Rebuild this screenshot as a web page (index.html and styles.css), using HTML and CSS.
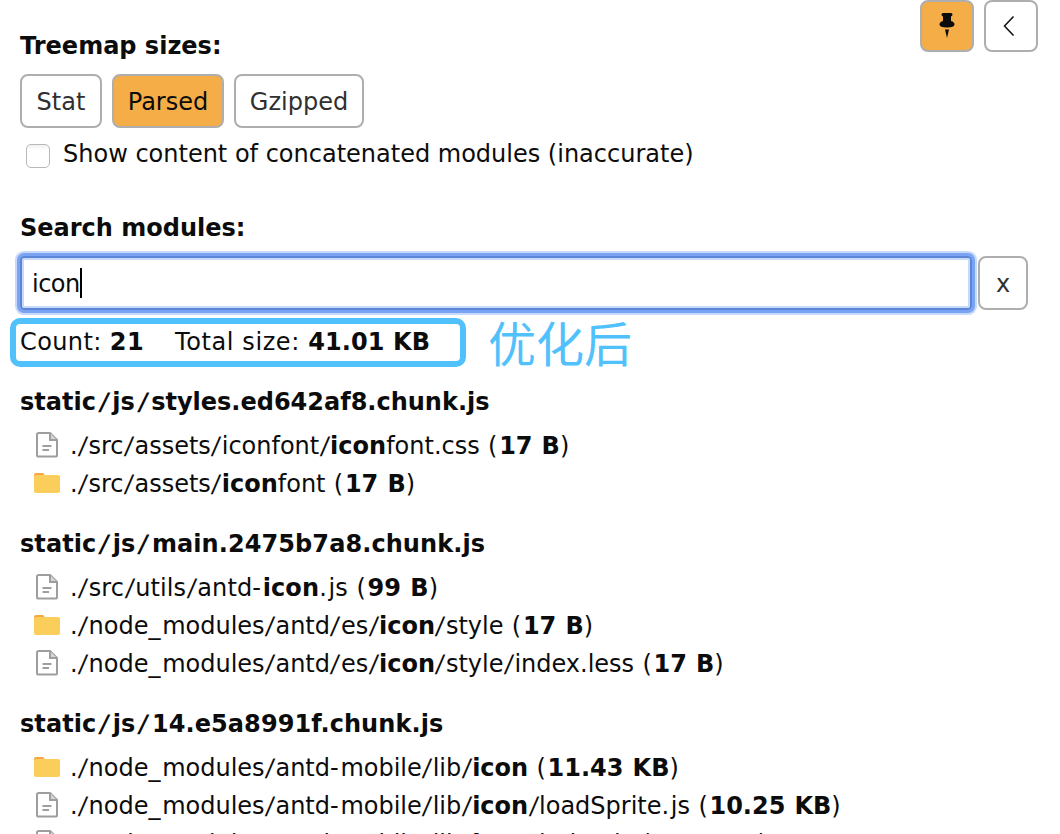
FILE: index.html
```html
<!DOCTYPE html>
<html lang="en">
<head>
<meta charset="utf-8">
<title>Treemap sizes</title>
<link rel="stylesheet" href="styles.css">
</head>
<body>
<svg class="defs" width="0" height="0">
  <symbol id="file" viewBox="0 0 26 28">
    <path d="M4.600 2H16L23 9V24a1.600 1.600 0 0 1-1.600 1.600H4.600A1.600 1.600 0 0 1 3 24V3.600A1.600 1.600 0 0 1 4.600 2z" fill="#fff" stroke="#9e9e9e" stroke-width="2"/>
    <path d="M16 2v7H23" fill="#d5d5d5" stroke="#9e9e9e" stroke-width="2"/>
    <path d="M8.500 15h9M8.500 19h6.500" fill="none" stroke="#9e9e9e" stroke-width="1.800"/>
  </symbol>
  <symbol id="folder" viewBox="0 0 26 28">
    <path d="M0 12V6a2 2 0 0 1 2-2H8.500a2 2 0 0 1 1.800 1.500L12 9z" fill="#f4a742"/>
    <rect y="6" width="26" height="18" rx="2" fill="#fbcd5a"/>
  </symbol>
</svg>
<main class="sidebar">
  <div class="toolbar">
    <button class="tool active" aria-label="Pin"><svg width="18" height="28" viewBox="0 0 18 28"><path d="M5 1h8q1.500 0 1.500 1.500T13 4.500V9q3.500 1 3.500 3.500Q16.500 15.500 9 15.500T1.500 12.500Q1.500 10 5 9V4.500Q3.500 4 3.500 2.500T5 1zM7 17.500h4L9 26z" fill="#0c0c0c"/></svg></button>
    <button class="tool hide" aria-label="Hide"><svg width="14" height="22" viewBox="0 0 14 22"><path d="M11.500 1.500L2.500 11l9 9.500" fill="none" stroke="#161616" stroke-width="1.600"/></svg></button>
  </div>
  <section class="sizes">
    <h2 class="label">Treemap sizes:</h2>
    <div class="options">
      <button class="option stat">Stat</button>
      <button class="option parsed active">Parsed</button>
      <button class="option gzipped">Gzipped</button>
    </div>
    <label class="check"><span class="box"></span><span>Show content of concatenated modules (inaccurate)</span></label>
  </section>
  <section class="search">
    <h2 class="label">Search modules:</h2>
    <div class="search-row">
      <div class="query"><span>icon</span><i class="caret"></i></div>
      <button class="clear">x</button>
    </div>
    <div class="summary">
      <div class="info"><span class="count">Count: <b>21</b></span><span class="total">Total size: <b>41.01 KB</b></span></div>
      <div class="note">优化后</div>
    </div>
  </section>
  <section class="chunk first">
    <h2 class="label">static<i>/</i>js<i>/</i>styles.ed642af8.chunk.js</h2>
    <div class="item"><svg class="icon"><use href="#file"/></svg><span>.<i>/</i>src<i>/</i>assets<i>/</i>iconfont<i>/</i><b>icon</b>font.css <u>(</u><b>17 B</b>)</span></div>
    <div class="item"><svg class="icon"><use href="#folder"/></svg><span>.<i>/</i>src<i>/</i>assets<i>/</i><b>icon</b>font <u>(</u><b>17 B</b>)</span></div>
  </section>
  <section class="chunk">
    <h2 class="label wide">static<i>/</i>js<i>/</i>main.2475b7a8.chunk.js</h2>
    <div class="item loose"><svg class="icon"><use href="#file"/></svg><span>.<i>/</i>src<i>/</i>utils<i>/</i>antd<u>-</u><b>icon</b><u>.</u>js <u>(</u><b>99 B</b>)</span></div>
    <div class="item"><svg class="icon"><use href="#folder"/></svg><span>.<i>/</i>node<u>_</u>modules<i>/</i>antd<i>/</i>es<i>/</i><b>icon</b><i>/</i>style <u>(</u><b>17 B</b>)</span></div>
    <div class="item"><svg class="icon"><use href="#file"/></svg><span>.<i>/</i>node<u>_</u>modules<i>/</i>antd<i>/</i>es<i>/</i><b>icon</b><i>/</i>style<i>/</i>index.less <u>(</u><b>17 B</b>)</span></div>
  </section>
  <section class="chunk">
    <h2 class="label wide">static<i>/</i>js<i>/</i>14.e5a8991f.chunk.js</h2>
    <div class="item"><svg class="icon"><use href="#folder"/></svg><span>.<i>/</i>node<u>_</u>modules<i>/</i>antd<u>-</u>mobile<i>/</i>lib<i>/</i><b>icon</b> <u>(</u><b>11.43 KB</b>)</span></div>
    <div class="item"><svg class="icon"><use href="#file"/></svg><span>.<i>/</i>node<u>_</u>modules<i>/</i>antd<u>-</u>mobile<i>/</i>lib<i>/</i><b>icon</b><i>/</i>loadSprite<u>.</u>js <u>(</u><b>10.25 KB</b>)</span></div>
    <div class="item"><svg class="icon peek"><use href="#file"/></svg><span>.<i>/</i>node<u>_</u>modules<i>/</i>antd<u>-</u>mobile<i>/</i>lib<i>/</i><b>icon</b><i>/</i>index<u>.</u>js <u>(</u><b>1.18 KB</b>)</span></div>
  </section>
</main>
</body>
</html>
```
FILE: styles.css
```css
* { box-sizing: border-box; }
body { margin: 0; background: #fff; color: #0c0c0c; font: 24px/38px Verdana, "DejaVu Sans", sans-serif; overflow: hidden; }
.defs { display: block; height: 0; }
.sidebar { width: 1060px; height: 834px; overflow: hidden; position: relative; padding: 27px 32px 0 20px; white-space: nowrap; }
button { font: inherit; color: #303030; background: #fff; border: 2px solid #aeaeae; border-radius: 8px; padding: 1px 0 0; display: flex; align-items: center; justify-content: center; }
.active { background: #f4ad47; color: #0c0c0c; }
.toolbar { position: absolute; top: 0; right: 22px; display: flex; gap: 10px; }
.tool { width: 54px; height: 52px; padding: 0; }
.hide { padding-right: 4px; }
.label { margin: 0; font-size: 24px; line-height: 38px; font-weight: bold; }
.wide { letter-spacing: 0.08px; }
/* Separators are set wider and more slanted than the surrounding text. */
.chunk i { display: inline-block; font-style: normal; margin: 0 1.4px; transform: skewX(-7deg); line-height: 1; }
.chunk .label i { margin: 0 3.8px; transform: skewX(-10deg); }
.chunk u { text-decoration: none; letter-spacing: 1.7px; }
.item { word-spacing: 0.7px; }
.loose { letter-spacing: 0.12px; }
.options { display: flex; gap: 10px; margin-top: 9px; }
.option { height: 54px; }
.stat { width: 82px; }
.parsed { width: 112px; }
.gzipped { width: 130px; }
.check { display: flex; padding-left: 6px; gap: 13px; margin-top: 7px; }
.box { width: 24px; height: 24px; margin-top: 9px; border: 1px solid #b8b8b8; border-radius: 5px; background: linear-gradient(#f0f0f0, #fff 5px); }
.search { margin-top: 36px; }
.search-row { display: flex; gap: 6px; margin-top: 9px; }
.query { width: 952px; height: 54px; display: flex; align-items: center; padding: 0 0 0 10px; letter-spacing: -0.5px; border: 2px solid #5b85d6; border-radius: 4px; box-shadow: 0 0 0 3px #7aa4f3, 0 0 0 5px #c8dafa, inset 0 0 0 2px #c8dafa; }
.query span { padding-top: 2px; }
.caret { width: 2px; height: 30px; background: #000; }
.clear { width: 50px; height: 54px; }
.summary { display: flex; margin: 8px 0 0 -10px; height: 49px; }
.info { width: 456px; height: 49px; border: 6px solid #51c1fc; border-radius: 10px; padding: 1px 0 0 4px; display: flex; line-height: 34px; }
.count { width: 155px; letter-spacing: 0.4px; }
.total { letter-spacing: 0.6px; }
.total b { letter-spacing: 0.1px; }
.note { margin-left: 22px; font: 400 48px/47px "Noto Sans CJK SC", sans-serif; color: #51c1fc; }
.chunk { margin-top: 22px; }
.first { margin-top: 16px; }
.chunk .label { margin-bottom: 6px; }
.item { display: flex; padding-left: 14px; gap: 10px; height: 38px; }
.icon { width: 26px; height: 28px; margin-top: 4px; }
```
